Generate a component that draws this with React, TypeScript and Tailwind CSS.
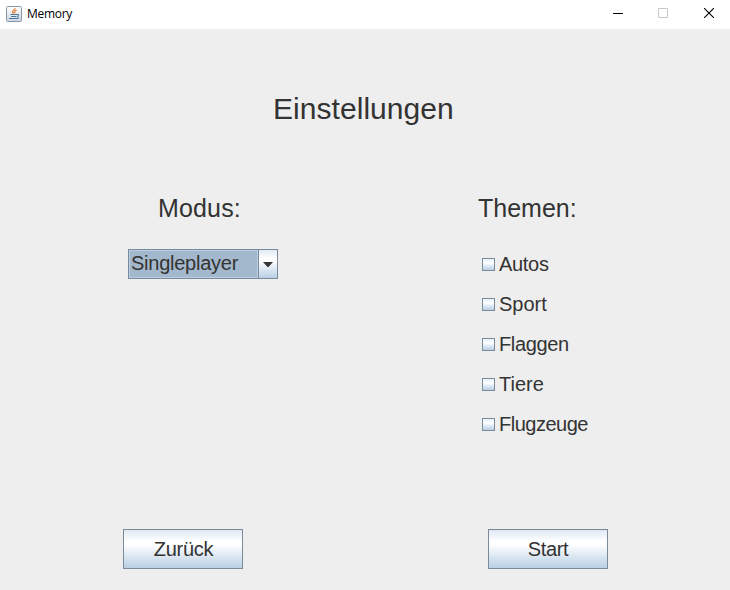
import React from "react";

const themes = [
  { name: "Autos", tracking: "tracking-[-0.3px]" },
  { name: "Sport", tracking: "tracking-[0px]" },
  { name: "Flaggen", tracking: "tracking-[-0.35px]" },
  { name: "Tiere", tracking: "tracking-[0px]" },
  { name: "Flugzeuge", tracking: "tracking-[-0.5px]" },
];

function JavaIcon() {
  return (
    <svg width="16" height="16" viewBox="0 0 16 16" fill="none" className="shrink-0">
      <defs>
        <linearGradient id="tile" x1="0" y1="0" x2="0" y2="1">
          <stop offset="0" stopColor="#ffffff" />
          <stop offset="1" stopColor="#cbd7e2" />
        </linearGradient>
      </defs>
      <rect x="0.5" y="0.5" width="15" height="15" rx="1" fill="url(#tile)" stroke="#8797a8" />
      <path d="M9 2C9.4 4 5.8 4.4 6.6 6.2L7.7 7.6M10.6 4.2C8.5 5 8 5.8 9 7.2" stroke="#e5883c" strokeWidth="1.3" />
      <path d="M4.5 8.5h6M5 10.5h5M10.5 8.6c2.8-.7 2.4 1.9.1 2.3M3 12.5h8.5l1.5-.7" stroke="#4f7899" strokeWidth="1.1" />
    </svg>
  );
}

function TitleBar() {
  return (
    <header className="flex h-[29px] shrink-0 items-start bg-white pl-[6px]">
      <div className="flex h-[27px] flex-1 items-center gap-[5px] text-[12px] text-black [font-family:'Open_Sans','Noto_Sans',sans-serif]">
        <JavaIcon />
        <span className="tracking-[-0.3px]">Memory</span>
      </div>
      <div className="flex h-[26px] items-center gap-[35px] pr-4 text-black">
        <button aria-label="Minimieren">
          <svg width="10" height="10" className="block"><path d="M0 5.5h10" stroke="currentColor" /></svg>
        </button>
        <button aria-label="Maximieren" disabled className="text-[#c8c8c8]">
          <svg width="10" height="10" className="block"><path d="M.5 .5h9v9h-9z" fill="none" stroke="currentColor" /></svg>
        </button>
        <button aria-label="Schließen" className="pl-px">
          <svg width="10" height="10" className="block"><path d="M0 0l10 10M10 0L0 10" stroke="currentColor" strokeWidth="1.1" /></svg>
        </button>
      </div>
    </header>
  );
}

function MetalButton({ children }: { children: React.ReactNode }) {
  return (
    <button className="h-10 w-[120px] border border-[#7a8a99] bg-[linear-gradient(#dfe9f3_0%,#ffffff_30%,#ffffff_38%,#b8cfe5_100%)] text-[20px] leading-[38px] tracking-[-0.3px]">
      {children}
    </button>
  );
}

export default function App() {
  return (
    <div className="flex h-[590px] w-[730px] flex-col overflow-hidden bg-[#eeeeee] text-[#333333] [font-family:'Liberation_Sans',Arial,sans-serif]">
      <TitleBar />
      <main className="flex flex-1 flex-col">
        <h1 className="mt-[60px] pl-[273px] text-[30px] leading-[40px] tracking-[0.05px]">Einstellungen</h1>
        <div className="mt-[64px] flex h-[336px]">
          <section className="w-[478px] pl-[128px]">
            <h2 className="pl-[30px] text-[25px] leading-[30px] tracking-[0.15px]">Modus:</h2>
            <div className="mt-[26px] flex h-[30px] w-[150px] border border-[#7a8a99]">
              <div className="w-[129px] border border-[#b8cfe5] bg-[#a3b8cc] pl-px text-[20px] leading-[25px] tracking-[-0.25px]">
                Singleplayer
              </div>
              <div className="flex flex-1 items-center justify-center border-l border-[#7a8a99] bg-[linear-gradient(#dfe9f3_0%,#ffffff_30%,#ffffff_38%,#b8cfe5_100%)] pt-px">
                <svg width="10" height="5" className="block"><path d="M0 0h10L5.5 5h-1z" fill="#333333" /></svg>
              </div>
            </div>
          </section>
          <section>
            <h2 className="text-[25px] leading-[30px]">Themen:</h2>
            <ul className="mt-[21px] pl-1">
              {themes.map(({ name, tracking }) => (
                <li key={name} className="flex h-10 items-center gap-1 text-[20px] leading-[40px]">
                  <span className="h-[13px] w-[13px] border border-[#7a8a99] bg-[linear-gradient(#e8f0f7_0%,#ffffff_35%,#b8cfe5_100%)]" />
                  <span className={tracking}>{name}</span>
                </li>
              ))}
            </ul>
          </section>
        </div>
        <div className="flex gap-[245px] pl-[123px]">
          <MetalButton><span className="pl-px">Zurück</span></MetalButton>
          <MetalButton>Start</MetalButton>
        </div>
      </main>
    </div>
  );
}
